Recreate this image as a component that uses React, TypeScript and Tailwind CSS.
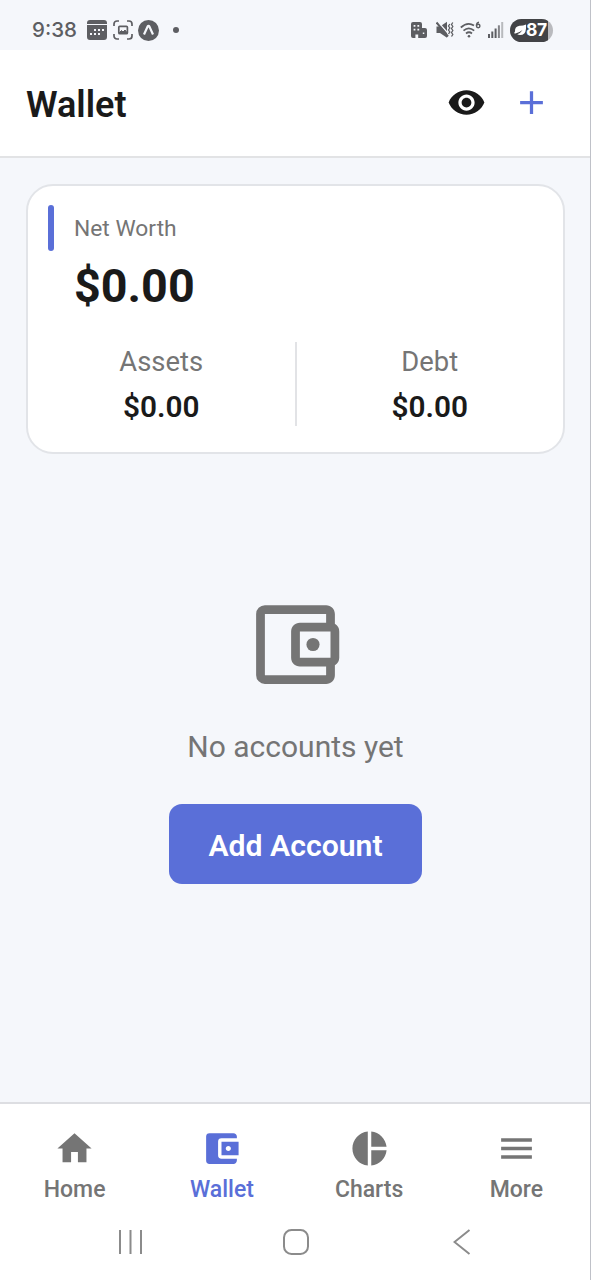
import type { ReactNode } from "react";
import {
  MdAccountBalanceWallet,
  MdAdd,
  MdHome,
  MdMenu,
  MdOutlineAccountBalanceWallet,
  MdPieChart,
  MdVisibility,
} from "react-icons/md";

function StatusBar() {
  return (
    <div className="flex h-[50px] shrink-0 items-center bg-[#f5f7fb] pt-[10px] pl-8 text-[#5d5e62]">
      <span className="w-[46px] font-['Inter'] text-[20.5px] leading-none font-medium whitespace-nowrap">9:38</span>
      <svg className="ml-[9px] h-5 w-5" viewBox="0 0 20 20" fill="currentColor">
        <path d="M0 4V3a3 3 0 0 1 3-3h14a3 3 0 0 1 3 3v1z" />
        <path
          fillRule="evenodd"
          d="M0 5h20v12a3 3 0 0 1-3 3H3a3 3 0 0 1-3-3zM7 9v2h2V9zm4 0v2h2V9zm4 0v2h2V9zM3 13v2h2v-2zm4 0v2h2v-2zm4 0v2h2v-2z"
        />
      </svg>
      <svg className="ml-[6px] h-5 w-5" viewBox="0 0 20 20" fill="none" stroke="currentColor" strokeWidth="1.7">
        <path d="M1 6V4a3 3 0 0 1 3-3h2M14 1h2a3 3 0 0 1 3 3v2M19 14v2a3 3 0 0 1-3 3h-2M6 19H4a3 3 0 0 1-3-3v-2" />
        <rect x="5.8" y="6.3" width="8.6" height="7.4" rx="1" />
        <path d="m6 13 2.5-2.5L10 12l2-2 2.3 3z" fill="currentColor" strokeWidth="1" />
      </svg>
      <svg className="ml-[5px] h-[21px] w-[21px]" viewBox="0 0 21 21">
        <circle cx="10.5" cy="10.5" r="10.5" fill="currentColor" />
        <path d="m6 14.5 3.5-7.8q1-1.6 2 0l3.5 7.8" fill="none" stroke="#f5f7fb" strokeWidth="2.2" />
      </svg>
      <span className="ml-[14px] h-[6px] w-[6px] rounded-full bg-current" />
      <div className="ml-auto flex items-center pr-[37px]">
        <svg className="h-[17px] w-[17px]" viewBox="0 0 17 17" fill="currentColor">
          <path
            fillRule="evenodd"
            d="M0 2a2 2 0 0 1 2-2h7a2 2 0 0 1 2 2v4h3a2 2 0 0 1 2 2v6a2 2 0 0 1-2 2H7.200v-3.500H4.400V16H2a2 2 0 0 1-2-2zm2.600 1v1.700h1.800V3zm3.800 0v1.700h1.800V3zM2.600 6.800v1.700h1.800V6.800zm3.800 0v1.700h1.800V6.800zm5.400 3.700V12h1.500v-1.500z"
          />
        </svg>
        <svg className="ml-[8px] h-[18px] w-[18px]" viewBox="0 0 18 18" fill="none" stroke="currentColor" strokeWidth="1.5">
          <path d="M.5 5.5H4L11 .8v16L4 12H.5z" fill="currentColor" stroke="none" />
          <path d="m2 .8 11 12.700" stroke="#f5f7fb" strokeWidth="1.300" />
          <path d="m.5 1.500 11.500 14" strokeWidth="2" />
          <path d="m13.800 3-1.300 2 1.300 2-1.300 2 1.300 2-1.300 2M16.800 1.500l-1.300 2 1.300 2-1.300 2 1.300 2-1.300 2 1.300 2-1.300 2" strokeWidth="1.300" />
        </svg>
        <svg className="ml-[6px] h-[18px] w-[21px]" viewBox="0 0 21 18" fill="none" stroke="currentColor" strokeWidth="1.7">
          <path d="M.8 6.500Q7.500.4 14 4.500M3.500 9.700q5.200-4.700 10.700 0M6 12.500q3-2.500 6 0" />
          <circle cx="9" cy="15.200" r="1.300" fill="currentColor" stroke="none" />
          <path d="M19 1.300q-2.500.4-2.500 3.300" strokeWidth="1.500" />
          <circle cx="18.200" cy="5" r="1.700" strokeWidth="1.500" />
        </svg>
        <svg className="ml-[7px] h-4 w-4" viewBox="0 0 16 16" fill="currentColor">
          <path d="M0 12h2v4H0zM3.300 9.500h2V16h-2zM6.600 6.500h2V16h-2z" />
          <path d="M9.900 3.300h2V16h-2z" opacity=".75" />
          <path d="M13.200 0h2v16h-2z" opacity=".4" />
        </svg>
        <div className="ml-[6px] h-[23px] w-[43px] overflow-hidden rounded-full bg-[#b9babe]">
          <div className="flex h-full w-[38px] items-center bg-[#424346] pl-[4px] text-white">
            <svg className="h-[12px] w-[12px] shrink-0" viewBox="0 0 12 12" fill="currentColor">
              <path d="M12 .5v4.200Q11.500 11 6 11q-1.500 0-2.800-.8 3.500-1 5.300-4.200Q5.500 8.500 1.500 9.500L0 9.200l1-1.700Q.6 2.500 5.500 1.700 9 1.800 12 .5z" />
            </svg>
            <span className="font-['Inter'] text-[17.5px] leading-none font-bold tracking-[-0.3px]">87</span>
          </div>
        </div>
      </div>
    </div>
  );
}

function Stat({ label, value }: { label: string; value: string }) {
  return (
    <div className="flex flex-1 flex-col items-center">
      <span className="pt-px text-[27.4px] leading-[38px] text-[#757575]">{label}</span>
      <span className="mt-[7px] text-[29.8px] leading-[38px] font-semibold text-[#1a1a1a]">{value}</span>
    </div>
  );
}

function Tab({ icon, label, active }: { icon: ReactNode; label: string; active?: boolean }) {
  return (
    <button className={`flex flex-1 flex-col items-center ${active ? "text-[#5a6fd8]" : "text-[#757575]"}`}>
      <span className="text-[41px]">{icon}</span>
      <span className="mt-[5px] text-[23px] leading-[31px] font-medium">{label}</span>
    </button>
  );
}

export default function App() {
  return (
    <div className="flex h-[1280px] w-[591px] flex-col border-r border-[#bfc1c8] bg-[#f5f7fb] font-['Roboto',sans-serif]">
      <StatusBar />
      <header className="flex h-[108px] shrink-0 items-center border-b-2 border-[#e2e3e5] bg-white pr-[39px] pl-[26px]">
        <h1 className="flex-1 pt-[3px] text-[36px] leading-none font-semibold text-[#1a1a1a]">Wallet</h1>
        <MdVisibility className="mb-px text-[39px] text-[#1a1a1a]" />
        <MdAdd className="mb-px ml-[26px] text-[39px] text-[#5a6fd8]" />
      </header>

      <main className="flex flex-1 flex-col pt-[26px] pr-[25px] pl-[26px]">
        <section className="h-[270px] rounded-[27px] border-2 border-[#e2e4e8] bg-white pt-[19px]">
          <div className="flex items-start pl-[20px]">
            <div className="h-[46px] w-[6px] rounded-[3px] bg-[#5a6fd8]" />
            <div className="ml-[20px] flex flex-col">
              <span className="pt-[9px] text-[22.8px] leading-[30px] text-[#757575]">Net Worth</span>
              <span className="mt-[14px] text-[46.7px] leading-[56px] font-bold text-[#1a1a1a]">$0.00</span>
            </div>
          </div>
          <div className="mt-[28px] flex h-[84px]">
            <Stat label="Assets" value="$0.00" />
            <div className="w-[2px] bg-[#e2e3e6]" />
            <Stat label="Debt" value="$0.00" />
          </div>
        </section>

        <section className="mt-[138px] flex flex-col items-center">
          <MdOutlineAccountBalanceWallet className="text-[105px] text-[#757575]" />
          <p className="mt-[30px] text-[30px] leading-[40px] text-[#757575]">No accounts yet</p>
          <button className="mt-[37px] h-[80px] w-[253px] rounded-[13px] bg-[#5a6fd8] pt-[4px] text-[30.2px] font-semibold text-white">
            Add Account
          </button>
        </section>
      </main>

      <nav className="flex h-[101px] shrink-0 border-t-2 border-[#dddee2] bg-white pt-[24px] pl-px">
        <Tab icon={<MdHome />} label="Home" />
        <Tab icon={<MdAccountBalanceWallet />} label="Wallet" active />
        <Tab icon={<MdPieChart />} label="Charts" />
        <Tab icon={<MdMenu />} label="More" />
      </nav>

      <div className="flex h-[77px] shrink-0 items-center bg-white pl-[117px] text-[#8b8b8b]">
        <svg className="h-[26px] w-[26px]" viewBox="0 0 26 26" fill="none" stroke="currentColor" strokeWidth="2">
          <path d="M3 1v24M13.5 1v24M24 1v24" />
        </svg>
        <svg className="ml-[140px] h-[26px] w-[26px]" viewBox="0 0 26 26" fill="none" stroke="currentColor" strokeWidth="2">
          <rect x="1" y="1" width="24" height="24" rx="7.5" />
        </svg>
        <svg className="ml-[144px] h-[26px] w-[18px]" viewBox="0 0 18 26" fill="none" stroke="currentColor" strokeWidth="2">
          <path d="M16.500 1 1.500 13l15 12" />
        </svg>
      </div>
    </div>
  );
}
